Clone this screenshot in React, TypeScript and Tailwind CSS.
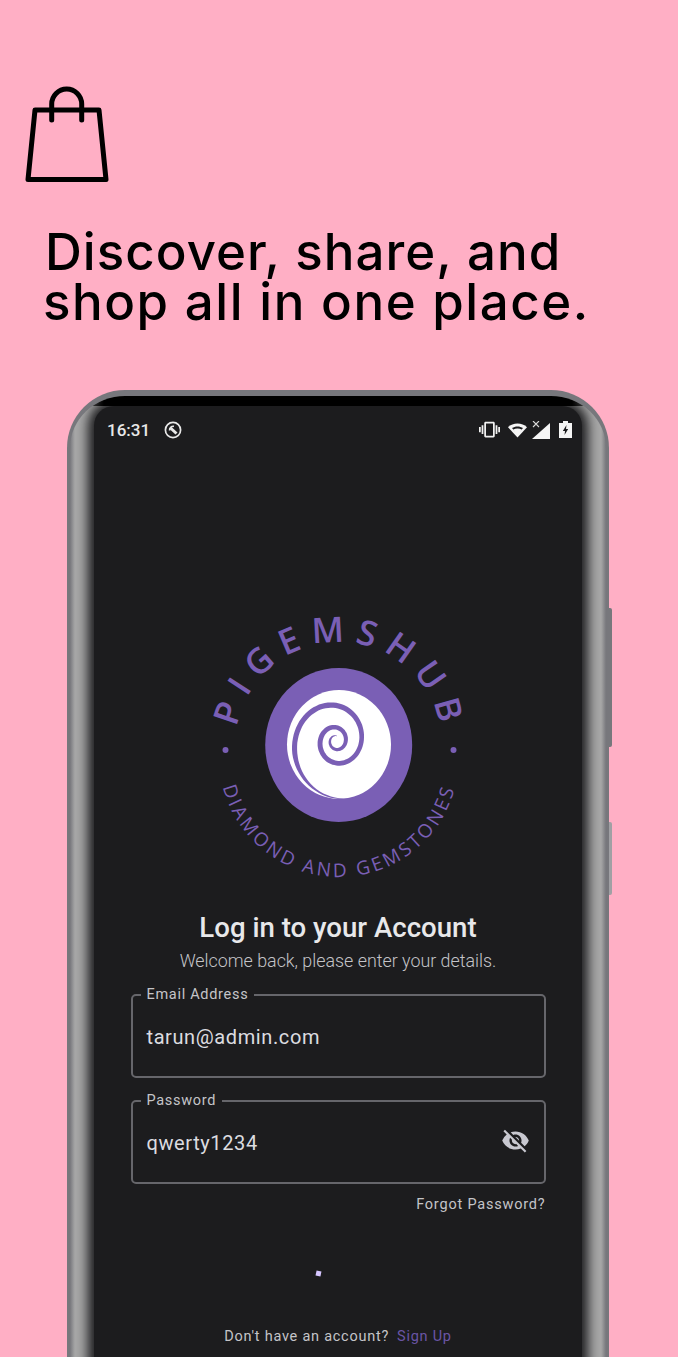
import { MdVisibilityOff, MdVibration } from 'react-icons/md'

const BagIcon = () => (
  <svg width="90" height="100" viewBox="0 0 90 100" fill="none" stroke="black" strokeWidth="5" strokeLinecap="round" strokeLinejoin="round">
    <path d="M10 24H74L81 93.5H3Z" />
    <path d="M26.7 34V18A15 15 0 0 1 56.7 18V34" />
  </svg>
)

const StatusBar = () => (
  <div className="flex items-center justify-between pl-[13px] pr-[10px] pt-[13px] text-white">
    <div className="flex items-center gap-[14px]">
      <span className="text-[17px] font-medium leading-[20px] text-[#e8e8e8]">16:31</span>
      <svg width="18" height="18" viewBox="0 0 18 18" fill="none" stroke="#e8e8e8">
        <circle cx="9" cy="9" r="7.6" strokeWidth="1.7" />
        <path d="M5.6 9.5A3.8 3.8 0 0 1 10 5.3" strokeWidth="1.7" />
        <path d="M6.5 7L12.5 12.5" strokeWidth="3" />
      </svg>
    </div>
    <div className="flex items-center text-[#f2f2f2]">
      <MdVibration size={21} />
      <svg width="19" height="16" viewBox="0 0 20 16" fill="#f5f5f5" className="ml-[8px]">
        <path d="M10 16L0 5C5 0 15 0 20 5Z" />
        <path d="M10 12.5L4.2 6C7.5 3.6 12.5 3.6 15.8 6Z" fill="#1c1c1e" />
        <path d="M10 15L5.6 7.6C8 6 12 6 14.4 7.6Z" />
      </svg>
      <svg width="18" height="18" viewBox="0 0 18 18" fill="#f5f5f5" className="ml-[5px]">
        <path d="M0 18L18 2V18Z" />
        <path d="M1 0L7 6M7 0L1 6" stroke="#d8d8d8" strokeWidth="1.1" fill="none" />
      </svg>
      <svg width="13" height="17" viewBox="0 0 13 17" className="ml-[9px]">
        <path d="M4 0H9V2H13V17H0V2H4Z" fill="#f5f5f5" />
        <path d="M7.5 4L3.8 10H6L5.5 14L9.2 8H7Z" fill="#1c1c1e" />
      </svg>
    </div>
  </div>
)

// stroke width of the swirl along its angle: [angle, width]
const swirlWidths = [[-1.95, 0.3], [-1.2, 1.8], [-0.3, 5], [1.6, 5.4], [3.1, 4.6], [6.3, 5], [9.4, 4], [12.6, 2.4], [14.4, 0.4]]

const swirlWidth = (a: number) => {
  for (let i = 0; i < swirlWidths.length - 1; i++) {
    const [a0, w0] = swirlWidths[i]
    const [a1, w1] = swirlWidths[i + 1]
    if (a <= a1) return w0 + ((w1 - w0) * (a - a0)) / (a1 - a0)
  }
  return 0.4
}

const swirlPoint = (a: number) => {
  const r = 41 * Math.exp(-0.152 * a)
  return [136 - r * Math.cos(a), 141 - 1.1 * r * Math.sin(a)]
}

const swirlPath = () => {
  const left: string[] = []
  const right: string[] = []
  for (let a = -1.95; a <= 14.4; a += 0.08) {
    const [x, y] = swirlPoint(a)
    const [x2, y2] = swirlPoint(a + 0.02)
    const len = Math.hypot(x2 - x, y2 - y)
    const w = swirlWidth(a) / 2
    const nx = ((y2 - y) / len) * w
    const ny = ((x2 - x) / len) * w
    left.push(`${(x - nx).toFixed(1)} ${(y + ny).toFixed(1)}`)
    right.unshift(`${(x + nx).toFixed(1)} ${(y - ny).toFixed(1)}`)
  }
  return `M${left.join('L')}L${right.join('L')}Z`
}

const Logo = () => (
  <svg width="280" height="290" viewBox="-2 0 280 290" className="mx-auto block">
    <defs>
      <path id="topArc" d="M35.7 145A103 103 0 1 1 241.7 145" />
      <path id="bottomArc" d="M19 157A120 120 0 0 0 259 157" />
    </defs>
    <text fontFamily="Open Sans" fontSize="35" fontWeight="600" fill="#7a5fb5" letterSpacing="10" textAnchor="middle">
      <textPath href="#topArc" startOffset="51%">PIGEMSHUB</textPath>
    </text>
    <text fontFamily="Open Sans" fontSize="19" fill="#7a5fb5" letterSpacing="3" textAnchor="middle">
      <textPath href="#bottomArc" startOffset="50%">DIAMOND AND GEMSTONES</textPath>
    </text>
    <circle cx="25.5" cy="150" r="3" fill="#7a5fb5" />
    <circle cx="253.5" cy="150" r="3" fill="#7a5fb5" />
    <ellipse cx="138.7" cy="145" rx="73.5" ry="77" fill="#7a5fb5" />
    <ellipse cx="139" cy="144.5" rx="52" ry="54.5" fill="#ffffff" />
    <path d={swirlPath()} fill="#7a5fb5" />
  </svg>
)

const Field = ({ label, value, icon }: { label: string, value: string, icon?: boolean }) => (
  <div className="relative flex h-[84px] w-[415px] items-center justify-between rounded-[5px] border-2 border-[#66666b] px-[14px]">
    <span className="absolute left-[8px] top-[-10px] bg-[#1c1c1e] px-[6px] text-[14.5px] leading-[18px] tracking-[0.7px] text-[#c4c4c8]">{label}</span>
    <span className="mt-[2px] text-[20px] tracking-[0.6px] text-[#dcdce0]">{value}</span>
    {icon && <MdVisibilityOff size={29} className="mb-[4px] text-[#c8c8d0]" />}
  </div>
)

const App = () => {
  return (
    <div className="h-[1357px] w-[678px] overflow-hidden bg-[#ffafc5] font-['Roboto',sans-serif]">
      <div className="pl-[25px] pt-[86px]">
        <BagIcon />
      </div>
      <h1 className="pl-[45px] pt-[41px] font-['Inter',sans-serif] text-[51px] font-medium leading-[50px] text-black">
        <span className="tracking-[1.05px]">Discover, share, and</span>
        <br />
        <span className="-ml-[2px] tracking-[1.55px]">shop all in one place.</span>
      </h1>
      <div className="relative ml-[67px] mt-[63px] h-[1100px] w-[542px]">
        <div className="absolute left-[542px] top-[218px] h-[139px] w-[3px] rounded-r-[2px] bg-[#77777c]" />
        <div className="absolute left-[542px] top-[432px] h-[73px] w-[3px] rounded-r-[2px] bg-[#a0a0a4]" />
        <div className="h-full overflow-hidden rounded-t-[58px] border-x-[3px] border-t-[6px] border-[#77777c] bg-[linear-gradient(to_right,#77777c_0,#a8a8a8_5px,#a8a8a8_531px,#77777c_536px)]">
          <div className="relative z-10 h-[10px] bg-[linear-gradient(to_right,transparent_8px,#000000_34px,#000000_502px,transparent_528px)]" />
          <div className="mx-[24px] h-[1095px] rounded-t-[20px] bg-[#1c1c1e] shadow-[0_0_12px_6px_#1c1c1e]">
            <StatusBar />
            <div className="pt-[160px]">
              <Logo />
            </div>
            <div className="flex flex-col items-center">
              <h2 className="mt-[21px] text-[27.6px] font-medium leading-[34px] text-[#e8e8ea]">Log in to your Account</h2>
              <p className="mt-[3px] text-[17.85px] font-light leading-[26px] text-[#c4c4c8]">Welcome back, please enter your details.</p>
              <div className="mt-[20px]">
                <Field label="Email Address" value="tarun@admin.com" />
              </div>
              <div className="mt-[22px]">
                <Field label="Password" value="qwerty1234" icon />
              </div>
              <div className="mt-[12px] w-[415px] text-right text-[14.5px] leading-[18px] tracking-[0.8px] text-[#c4c4c8]">Forgot Password?</div>
              <div className="mr-[40px] mt-[57px] h-[5px] w-[5px] rotate-12 bg-[#d6c6ff]" />
              <p className="mt-[52px] text-[14.5px] leading-[18px] tracking-[0.75px] text-[#c4c4c8]">
                Don't have an account?
                <span className="ml-[8px] text-[#6a55a5]">Sign Up</span>
              </p>
            </div>
          </div>
        </div>
      </div>
    </div>
  )
}

export default App
